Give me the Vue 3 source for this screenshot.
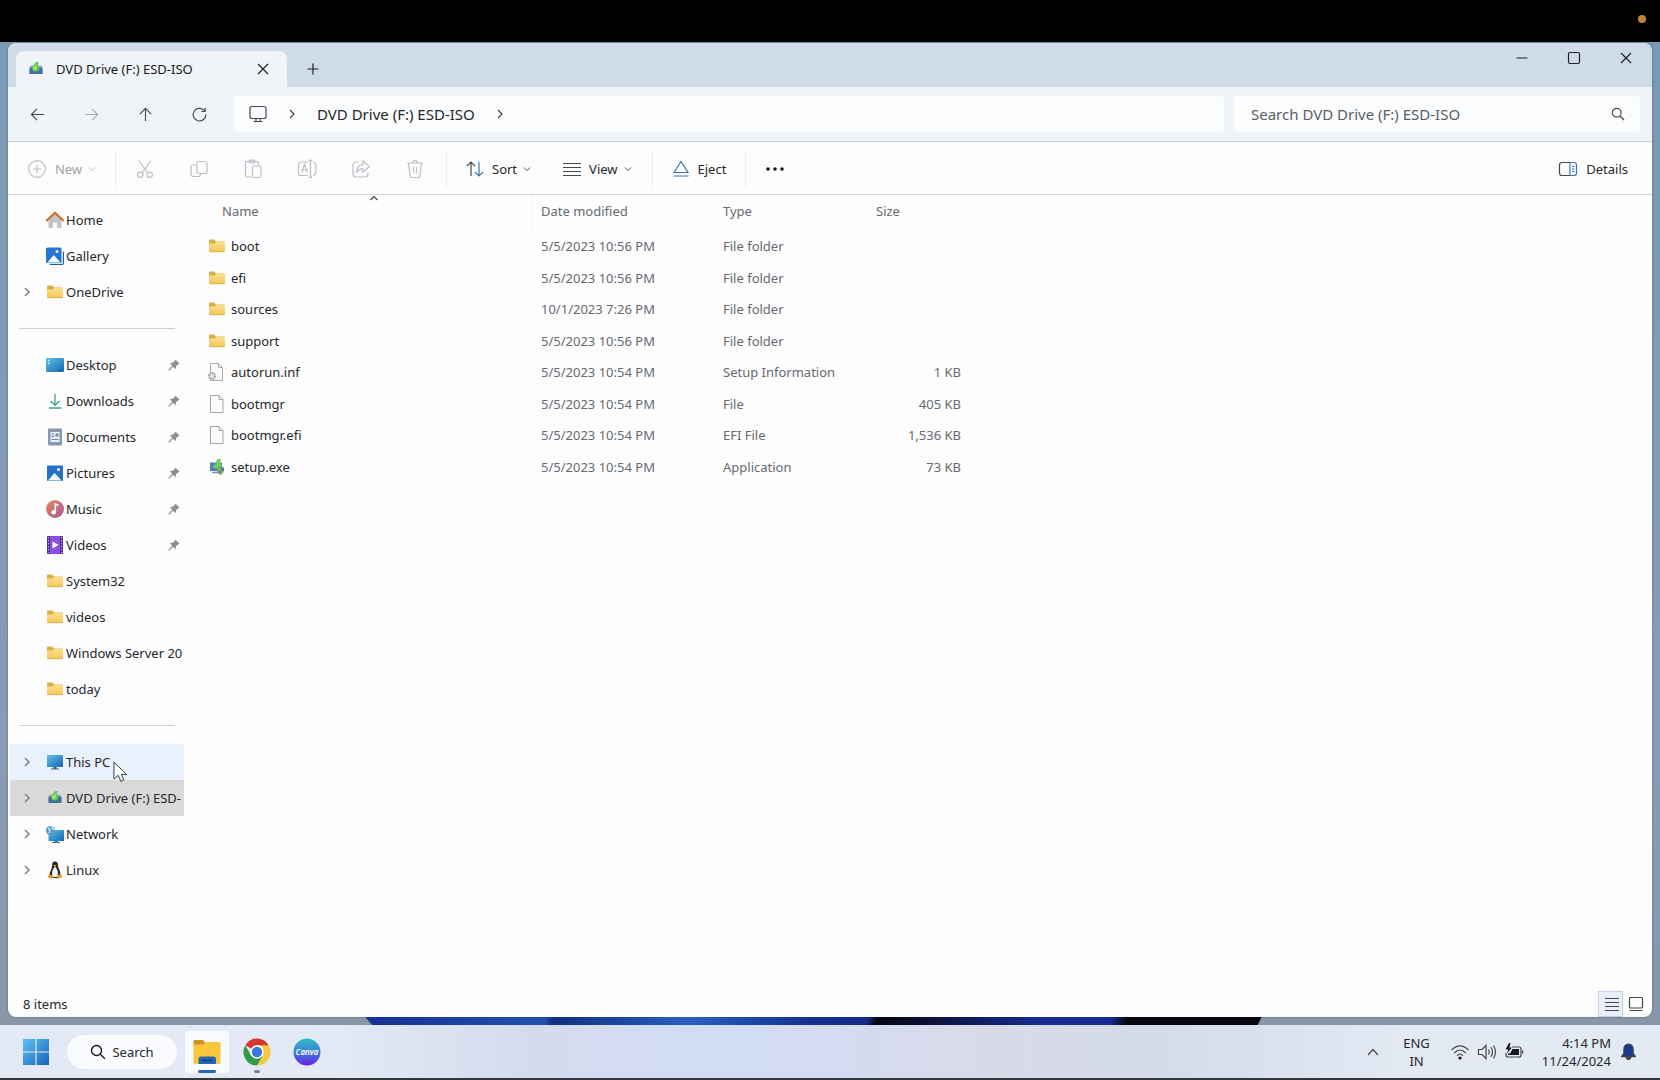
<script setup>
import {reactive} from 'vue'

const data = reactive({
  keyword: "",
  language: ["ENG", "IN"],
  time: "4:14 PM",
  date: "11/24/2024",
  places: [
    {name: "Home", icon: "home"},
    {name: "Gallery", icon: "gallery"},
    {name: "OneDrive", icon: "folder", expand: true}
  ],
  pinned: [
    {name: "Desktop", icon: "desktop", pin: true},
    {name: "Downloads", icon: "download", pin: true},
    {name: "Documents", icon: "document", pin: true},
    {name: "Pictures", icon: "picture", pin: true},
    {name: "Music", icon: "music", pin: true},
    {name: "Videos", icon: "video", pin: true},
    {name: "System32", icon: "folder"},
    {name: "videos", icon: "folder"},
    {name: "Windows Server 20", icon: "folder"},
    {name: "today", icon: "folder"}
  ],
  devices: [
    {name: "This PC", icon: "pc", expand: true, state: "hovered"},
    {name: "DVD Drive (F:) ESD-", icon: "dvd", expand: true, state: "selected"},
    {name: "Network", icon: "network", expand: true},
    {name: "Linux", icon: "linux", expand: true}
  ],
  tools: [
    {name: "Cut", icon: "cut"},
    {name: "Copy", icon: "copy"},
    {name: "Paste", icon: "paste"},
    {name: "Rename", icon: "rename"},
    {name: "Share", icon: "share"},
    {name: "Delete", icon: "trash"}
  ],
  files: [
    {name: "boot", icon: "folder", date: "5/5/2023 10:56 PM", type: "File folder", size: ""},
    {name: "efi", icon: "folder", date: "5/5/2023 10:56 PM", type: "File folder", size: ""},
    {name: "sources", icon: "folder", date: "10/1/2023 7:26 PM", type: "File folder", size: ""},
    {name: "support", icon: "folder", date: "5/5/2023 10:56 PM", type: "File folder", size: ""},
    {name: "autorun.inf", icon: "inf", date: "5/5/2023 10:54 PM", type: "Setup Information", size: "1 KB"},
    {name: "bootmgr", icon: "file", date: "5/5/2023 10:54 PM", type: "File", size: "405 KB"},
    {name: "bootmgr.efi", icon: "file", date: "5/5/2023 10:54 PM", type: "EFI File", size: "1,536 KB"},
    {name: "setup.exe", icon: "setup", date: "5/5/2023 10:54 PM", type: "Application", size: "73 KB"}
  ]
})
</script>

<template>
  <svg class="sprite" aria-hidden="true">
    <defs>
      <linearGradient id="g-folder" x1="0" y1="0" x2="0" y2="1">
        <stop offset="0" stop-color="#fbe08e"/><stop offset="1" stop-color="#f3c75a"/>
      </linearGradient>
      <linearGradient id="g-blue" x1="0" y1="0" x2="1" y2="1">
        <stop offset="0" stop-color="#5cc3e6"/><stop offset="1" stop-color="#1468b4"/>
      </linearGradient>
      <linearGradient id="g-win" x1="0" y1="0" x2="1" y2="1">
        <stop offset="0" stop-color="#5fc0f0"/><stop offset="1" stop-color="#1765c0"/>
      </linearGradient>
      <linearGradient id="g-music" x1="0" y1="0" x2="1" y2="1">
        <stop offset="0" stop-color="#e58a55"/><stop offset="1" stop-color="#a4589c"/>
      </linearGradient>
      <linearGradient id="g-canva" x1="0" y1="0" x2="0" y2="1">
        <stop offset="0" stop-color="#2fc0c4"/><stop offset="0.5" stop-color="#3f7fd8"/><stop offset="1" stop-color="#6a1fe6"/>
      </linearGradient>
    </defs>
    <symbol id="folder" viewBox="0 0 18 18">
      <path d="M1 3.500Q1 2.500 2 2.500H6L8 4.500H16Q17 4.500 17 5.500V8H1Z" fill="#d9ae45"/>
      <path d="M1 6.500H6.500L8 5H17V14Q17 15 16 15H2Q1 15 1 14Z" fill="url(#g-folder)"/>
      <path d="M1.500 14.700H16.500" stroke="#d9a93a" stroke-width="0.700"/>
    </symbol>
    <symbol id="home" viewBox="0 0 18 18">
      <path d="M2.500 8L9 2.500L15.500 8V17H11V11.500H7V17H2.500Z" fill="#c3c3c8"/>
      <path d="M1 9.300L9 1.800L17 9.300" fill="none" stroke="#cf6f2c" stroke-width="2.200" stroke-linecap="round" stroke-linejoin="round"/>
    </symbol>
    <symbol id="gallery" viewBox="0 0 18 18">
      <path d="M5 4H16Q18 4 18 6V16Q18 18 16 18H5Q3 18 3 16Z" fill="#2456a0"/>
      <path d="M3 16V17H15.500Q17 17 17 15.500V4H15Z" fill="#d7e8f7"/>
      <rect x="0" y="0.500" width="15.500" height="15.500" rx="1.500" fill="#2377d2"/>
      <path d="M1.500 15.500L7.700 8L14.500 15.500Z" fill="#f4f9fd"/>
      <circle cx="11" cy="4.500" r="1.500" fill="#fff"/>
    </symbol>
    <symbol id="desktop" viewBox="0 0 18 18">
      <rect y="2" width="18" height="14" rx="1.200" fill="url(#g-blue)"/>
      <path d="M2 4.500H3.500M2 7.500H3.500" stroke="#d6f2fb" stroke-width="1.300"/>
      <path d="M12 14H16.500" stroke="#0e477f" stroke-dasharray="1 1"/>
    </symbol>
    <symbol id="download" viewBox="0 0 18 18">
      <path d="M9 2V13M4.500 9L9 13.300L13.500 9M3 16H15.500" fill="none" stroke="#3da489" stroke-width="1.300"/>
    </symbol>
    <symbol id="document" viewBox="0 0 18 18">
      <rect x="2" y="0.500" width="14" height="17" rx="1" fill="#8797b1"/>
      <rect x="4.500" y="4" width="9" height="10" fill="#e8eef6"/>
      <path d="M5.500 6H8M5.500 8.300H8M5.500 11.500H12.500" stroke="#7285a3" stroke-width="1.200"/>
      <path d="M9.500 5.500H12.500V8.500H9.500Z" fill="#7285a3"/>
    </symbol>
    <symbol id="picture" viewBox="0 0 18 18">
      <rect x="1" y="1.500" width="16" height="15.500" rx="1" fill="#2371cb"/>
      <path d="M2 16.500L8.500 9L15.500 16.500Z" fill="#f4f9fd"/>
      <circle cx="12.500" cy="5.500" r="1.500" fill="#fff"/>
    </symbol>
    <symbol id="music" viewBox="0 0 18 18">
      <circle cx="9" cy="9" r="9" fill="url(#g-music)"/>
      <path d="M9.300 12.300V4L12.500 5.500" fill="none" stroke="#fff" stroke-width="1.600"/>
      <circle cx="7.600" cy="12.300" r="2.300" fill="#fff"/>
    </symbol>
    <symbol id="video" viewBox="0 0 18 18">
      <rect x="1" width="16" height="18" rx="1" fill="#4b2a93"/>
      <rect x="4" width="10" height="18" fill="#8a50dc"/>
      <path d="M2.500 1V17M15.500 1V17" stroke="#c3a7ef" stroke-width="1.200" stroke-dasharray="1.500 1.500"/>
      <path d="M6.500 5.500L12.500 9L6.500 12.500Z" fill="#fff"/>
    </symbol>
    <symbol id="pc" viewBox="0 0 18 18">
      <rect x="1" y="2" width="16" height="12" rx="0.700" fill="url(#g-blue)"/>
      <path d="M7.500 14H10.500V15.500H13V16.500H5V15.500H7.500Z" fill="#3d6789"/>
    </symbol>
    <symbol id="dvd" viewBox="0 0 18 18">
      <path d="M4 5.500H14L15.500 7V14H2.500V7Z" fill="#8fa9b8"/>
      <path d="M2.500 8.500L5 7.500H13L15.500 8.500V14H2.500Z" fill="#40709c"/>
      <path d="M5 8L6.500 5.500L7.500 3.500Q9.500 1.500 12 2.200Q10.500 3.500 11 5.500L12.500 10L9.500 11.500L6 11Z" fill="#62c956"/>
      <path d="M6 8.500L8.500 4.500L10 8L8 10.500Z" fill="#a6ec6c"/>
    </symbol>
    <symbol id="network" viewBox="0 0 18 18">
      <rect x="2.500" y="5" width="15.500" height="11" fill="url(#g-blue)"/>
      <path d="M8.500 16H11.500V17H14V18H6V17H8.500Z" fill="#3d6789"/>
      <circle cx="4.500" cy="5.500" r="4.500" fill="#5a9bc9"/>
      <path d="M2 3L4 5L3 8M5 1.500L7 4L9 4.500" stroke="#d3ebf7" stroke-width="1.300" fill="none"/>
    </symbol>
    <symbol id="linux" viewBox="0 0 18 18">
      <path d="M9 0.500Q12 0.500 12 4Q12 6.500 13.500 9Q15 12 14 15L12 17H6L3.500 14.500Q3.500 11.500 5 9Q6.200 6.500 6.200 4Q6 0.500 9 0.500Z" fill="#23221f"/>
      <path d="M9 5.500Q11 7.500 11.800 10.500Q12.300 14 11 16H7Q5.500 14 6.200 10.500Q7 7.500 9 5.500Z" fill="#f5f5f0"/>
      <path d="M7.200 4.500L9 3.800L10.800 4.700L9 6Z" fill="#e7a92f"/>
      <path d="M1.500 16L3.500 12.500L7.500 16.300L5.500 18ZM16.500 16L14.500 12.500L11 15L11.500 18Z" fill="#d9a02e"/>
    </symbol>
    <symbol id="file" viewBox="0 0 18 18">
      <path d="M2.500 0.500H11L15 4.500V17.500H2.500Z" fill="#fcfcfc" stroke="#a3a5a8"/>
      <path d="M11 0.500V4.500H15" fill="none" stroke="#a3a5a8"/>
    </symbol>
    <symbol id="inf" viewBox="0 0 18 18">
      <path d="M2.500 0.500H10.500L14.500 4.500V17.500H2.500Z" fill="#fafafa" stroke="#a8aaad"/>
      <path d="M10.500 0.500V4.500H14.500" fill="none" stroke="#a8aaad"/>
      <circle cx="4" cy="13" r="3" fill="#e4e4e6" stroke="#9c9ea2" stroke-width="2" stroke-dasharray="1.600 0.700"/>
    </symbol>
    <symbol id="setup" viewBox="0 0 18 18">
      <rect x="2" y="4.500" width="12" height="8.500" fill="#4f7fae"/>
      <path d="M4 9L7 6.500L9 1.500L13 0.500L12 4L14 8L9 11Z" fill="#6ccb67"/>
      <path d="M4 14.500H10" stroke="#7793ad" stroke-width="1.500"/>
      <path d="M9.500 9.500H16V13Q15.500 15.500 12.700 17Q10 15.500 9.500 13Z" fill="#93b64e"/>
      <path d="M12.700 9.500H16V13H12.700ZM9.500 13H12.700V17Q10 15.500 9.500 13Z" fill="#567ea4"/>
    </symbol>
    <symbol id="pin" viewBox="0 0 14 14">
      <path d="M8.500 0.500L13.500 5.500L12 6L9.500 8.500L9 12L6 9L1.500 13.500L0.500 13.500L0.500 12.500L5 8L2 5L5.500 4.500L8 2Z" fill="#8b8e91"/>
    </symbol>
    <symbol id="right" viewBox="0 0 10 10"><path d="M3 1L7 5L3 9"/></symbol>
    <symbol id="down" viewBox="0 0 10 10"><path d="M2 3.500L5 6.500L8 3.500"/></symbol>
    <symbol id="up-small" viewBox="0 0 10 10"><path d="M1.500 5L5 1.500L8.500 5"/></symbol>
    <symbol id="caret" viewBox="0 0 14 14"><path d="M2 10L7 4.500L12 10"/></symbol>
    <symbol id="close" viewBox="0 0 14 14"><path d="M2 2L12 12M12 2L2 12"/></symbol>
    <symbol id="plus" viewBox="0 0 14 14"><path d="M7 1.500V12.500M1.500 7H12.500"/></symbol>
    <symbol id="min" viewBox="0 0 14 14"><path d="M1.500 7H12.500"/></symbol>
    <symbol id="max" viewBox="0 0 14 14"><rect x="1.500" y="1.500" width="11" height="11" rx="1.500"/></symbol>
    <symbol id="back" viewBox="0 0 18 18"><path d="M16 9H2.500M8.500 3L2.500 9L8.500 15"/></symbol>
    <symbol id="forward" viewBox="0 0 18 18"><path d="M2 9H15.500M9.500 3L15.500 9L9.500 15"/></symbol>
    <symbol id="up" viewBox="0 0 18 18"><path d="M9 16V2.500M3 8.500L9 2.500L15 8.500"/></symbol>
    <symbol id="refresh" viewBox="0 0 18 18"><path d="M15.700 9A6.700 6.700 0 1 1 13.500 4.200L15 5.700M15 1.800V5.800H11"/></symbol>
    <symbol id="monitor" viewBox="0 0 18 18"><path d="M3 1.500H15Q17 1.500 17 3.500V11.500Q17 13.500 15 13.500H3Q1 13.500 1 11.500V3.500Q1 1.500 3 1.500ZM7 13.500V16.500M11 13.500V16.500M4.500 16.500H13.500"/></symbol>
    <symbol id="search" viewBox="0 0 14 14"><path d="M9 9L13 13"/><circle cx="5.700" cy="5.700" r="4.400"/></symbol>
    <symbol id="new" viewBox="0 0 20 20"><circle cx="10" cy="10" r="8.300"/><path d="M10 6V14M6 10H14"/></symbol>
    <symbol id="cut" viewBox="0 0 20 20"><path d="M4 1.500L12.500 13.500M16 1.500L7.500 13.500"/><circle cx="5.300" cy="15.800" r="2.700"/><circle cx="14.700" cy="15.800" r="2.700"/></symbol>
    <symbol id="copy" viewBox="0 0 20 20"><rect x="8" y="2.500" width="10" height="12" rx="2"/><path d="M8 6H4Q2 6 2 8V15Q2 17.500 4.500 17.500H9.500Q11.500 17.500 12 15"/></symbol>
    <symbol id="paste" viewBox="0 0 20 20"><path d="M8.500 18H4Q2.500 18 2.500 16.500V4Q2.500 2.500 4 2.500H14Q15.500 2.500 15.500 4V6M6 2.500Q6 1.200 7 1.200H11Q12 1.200 12 2.500T11 4H7Q6 4 6 2.500"/><rect x="9.500" y="7" width="8.500" height="11.500" rx="1.500" class="blue"/></symbol>
    <symbol id="rename" viewBox="0 0 20 20"><path d="M11 3H4Q1.500 3 1.500 5.500V14Q1.500 16.500 4 16.500H11M16 3Q18.800 3.500 18.800 6V13.500Q18.800 16 16 16.500M11.500 1.200H12.500Q13.500 1.200 13.500 3V16.500Q13.500 18.500 12.500 18.500H11.500M15.500 1.200Q13.500 1.200 13.500 3M15.500 18.500Q13.500 18.500 13.500 16.500M4.500 13.500L7.500 5.500L10.500 13.500M5.500 11H9.500"/></symbol>
    <symbol id="share" viewBox="0 0 20 20"><path d="M8 3H5Q2 3 2 6V15Q2 18 5 18H14Q17 18 17 15V13.500M12 2L18.500 7.500L12 13V9.800Q8 9.500 5.500 13.500Q6 6 12 5.300Z"/></symbol>
    <symbol id="trash" viewBox="0 0 20 20"><path d="M2 4H18M7.500 4Q7.500 1.500 10 1.500T12.500 4M3.500 4L5 16.500Q5.200 18.500 7 18.500H13Q14.800 18.500 15 16.500L16.500 4M8.500 8V14M11.500 8V14"/></symbol>
    <symbol id="sort" viewBox="0 0 18 18"><path d="M5 16V2M0.800 6.200L5 2L9.200 6.200"/><path d="M13 2V16M8.800 11.800L13 16L17.200 11.800" class="blue"/></symbol>
    <symbol id="view" viewBox="0 0 18 18"><path d="M0 3.500H18M0 7.500H18M0 11.500H18M0 15.500H18"/></symbol>
    <symbol id="eject" viewBox="0 0 18 18"><path d="M9 1.500L16 12.500H2ZM1.500 16H16.500" class="blue"/></symbol>
    <symbol id="more" viewBox="0 0 20 20"><g class="solid"><circle cx="3" cy="10" r="1.800"/><circle cx="10" cy="10" r="1.800"/><circle cx="17" cy="10" r="1.800"/></g></symbol>
    <symbol id="details" viewBox="0 0 20 20"><path d="M12 3.500H4Q1.500 3.500 1.500 6V14Q1.500 16.500 4 16.500H12"/><path d="M12 3.500H16Q18.500 3.500 18.500 6V14Q18.500 16.500 16 16.500H12ZM14 7.500H16.500M14 10H16.500M14 12.500H16.500" class="blue"/></symbol>
    <symbol id="list" viewBox="0 0 16 16"><path d="M1 2.500H15M1 6.500H15M1 10.500H15M1 14.500H15"/></symbol>
    <symbol id="thumb" viewBox="0 0 16 16"><rect x="1.500" y="1.500" width="13" height="10.500" rx="1"/><path d="M1.500 14.500H14.500"/></symbol>
    <symbol id="wifi" viewBox="0 0 20 20"><path d="M1.500 8Q10 -0.500 18.500 8M4.300 11Q10 5 15.700 11M7 13.800Q10 10.500 13 13.800"/><circle cx="10" cy="16" r="1.600" class="solid"/></symbol>
    <symbol id="volume" viewBox="0 0 20 20"><path d="M1.500 7.500H5L9 3.500V16.500L5 12.500H1.500ZM11.500 7.500Q13 10 11.500 12.500M14 5.300Q17 10 14 14.700M16.500 3.500Q20.500 10 16.500 16.500"/></symbol>
    <symbol id="battery" viewBox="0 0 20 20"><path d="M8 5H15Q17 5 17 7V13Q17 15 15 15H4Q2 15 2 13V11M18.700 8.500V11.500"/><path d="M8.500 7H15V13H4V11.500H6Z" class="solid"/><path d="M5 1L1.500 7.500H4.500L2.500 12L8 5.500H5.500L6.500 1Z" class="solid"/></symbol>
    <symbol id="bell" viewBox="0 0 16 18"><path d="M8 1Q13 1.300 13 7V11L15.500 14.500H0.500L3 11V7Q3 1.300 8 1ZM5.500 15.500H10.500Q10 17.500 8 17.500T5.500 15.500Z" fill="#173a8c"/></symbol>
    <symbol id="windows" viewBox="0 0 26 26"><path d="M0 0H12.400V12.400H0ZM13.600 0H26V12.400H13.600ZM0 13.600H12.400V26H0ZM13.600 13.600H26V26H13.600Z" fill="url(#g-win)"/></symbol>
    <symbol id="explorer" viewBox="0 0 28 28">
      <path d="M0.500 3Q0.500 2 1.500 2H10L12 4.500H20V9H0.500Z" fill="#cf9327"/>
      <path d="M0.500 6.500H10.500L12.500 4H26.500Q27.500 4 27.500 5V25Q27.500 26 26.500 26H1.500Q0.500 26 0.500 25Z" fill="#fac63c"/>
      <path d="M5.500 26V21.500Q5.500 18.500 8 18.500H20.500Q23 18.500 23 21.500V26Z" fill="#2365ae"/>
      <path d="M9 22.500H19.500" stroke="#123f7c" stroke-width="1.500"/>
    </symbol>
    <symbol id="chrome" viewBox="0 0 28 28">
      <path d="M14 14L2.300 7.250A13.500 13.500 0 0 1 25.700 7.250Z" fill="#d4382f"/>
      <path d="M14 7.250H25.700A13.500 13.500 0 0 1 14 27.500L19.850 17.400Z" fill="#f7c840"/>
      <path d="M8.150 17.400L2.300 7.250A13.500 13.500 0 0 0 14 27.500L19.850 17.400Z" fill="#35974a"/>
      <circle cx="14" cy="14" r="6.700" fill="#fff"/>
      <circle cx="14" cy="14" r="5.200" fill="#3a78e0"/>
    </symbol>
    <symbol id="cursor" viewBox="0 0 16 24">
      <path d="M1 1V19L5.500 15L8.500 21.500L11.500 20L8.800 14H14.500Z" fill="#fff" stroke="#2b2f36"/>
    </symbol>
  </svg>

  <main class="screen">
    <div class="camera-bar"><span class="dot"></span></div>

    <section class="window">
      <header class="titlebar">
        <div class="tab">
          <svg class="i18"><use href="#dvd"/></svg>
          <span class="tab-name">DVD Drive (F:) ESD-ISO</span>
          <button class="btn line dark" aria-label="Close tab"><svg class="i14"><use href="#close"/></svg></button>
        </div>
        <button class="btn line dark add" aria-label="New tab"><svg class="i14"><use href="#plus"/></svg></button>
        <div class="controls">
          <button class="btn line dark" aria-label="Minimize"><svg class="i14"><use href="#min"/></svg></button>
          <button class="btn line dark" aria-label="Maximize"><svg class="i14"><use href="#max"/></svg></button>
          <button class="btn line dark" aria-label="Close"><svg class="i14"><use href="#close"/></svg></button>
        </div>
      </header>

      <nav class="navbar">
        <div class="history">
          <button class="btn line" aria-label="Back"><svg class="i18"><use href="#back"/></svg></button>
          <button class="btn line off" aria-label="Forward"><svg class="i18"><use href="#forward"/></svg></button>
          <button class="btn line" aria-label="Up"><svg class="i18"><use href="#up"/></svg></button>
          <button class="btn line" aria-label="Refresh"><svg class="i18"><use href="#refresh"/></svg></button>
        </div>
        <div class="address line">
          <svg class="i18"><use href="#monitor"/></svg>
          <svg class="i10"><use href="#right"/></svg>
          <button class="btn crumb">DVD Drive (F:) ESD-ISO</button>
          <svg class="i10"><use href="#right"/></svg>
        </div>
        <label class="search line">
          <input v-model="data.keyword" type="text" placeholder="Search DVD Drive (F:) ESD-ISO" aria-label="Search" autocomplete="off"/>
          <svg class="i14"><use href="#search"/></svg>
        </label>
      </nav>

      <div class="toolbar line">
        <button class="btn tool new" disabled>
          <svg class="i20"><use href="#new"/></svg>New<svg class="i10"><use href="#down"/></svg>
        </button>
        <span class="sep tight"></span>
        <button v-for="item in data.tools" :key="item.name" class="btn square" disabled :aria-label="item.name">
          <svg class="i20"><use :href="'#' + item.icon"/></svg>
        </button>
        <span class="sep after"></span>
        <button class="btn tool"><svg class="i18"><use href="#sort"/></svg>Sort<svg class="i10"><use href="#down"/></svg></button>
        <button class="btn tool next"><svg class="i18"><use href="#view"/></svg>View<svg class="i10"><use href="#down"/></svg></button>
        <span class="sep"></span>
        <button class="btn tool"><svg class="i18"><use href="#eject"/></svg>Eject</button>
        <span class="sep"></span>
        <button class="btn" aria-label="More"><svg class="i20"><use href="#more"/></svg></button>
        <button class="btn tool details"><svg class="i20"><use href="#details"/></svg>Details</button>
      </div>

      <div class="content">
        <aside class="sidebar">
          <ul v-for="(group, index) in [data.places, data.pinned, data.devices]" :key="index">
            <li v-for="item in group" :key="item.name" :class="item.state">
              <svg class="i10 expand line"><use v-if="item.expand" href="#right"/></svg>
              <svg class="i18"><use :href="'#' + item.icon"/></svg>
              <a href="#">{{ item.name }}</a>
              <svg v-if="item.pin" class="pin"><use href="#pin"/></svg>
              <svg v-if="item.state === 'hovered'" class="cursor"><use href="#cursor"/></svg>
            </li>
          </ul>
        </aside>

        <div class="files">
          <table>
            <thead>
              <tr>
                <th class="col-name">Name<svg class="i10 sorted line"><use href="#up-small"/></svg></th>
                <th class="col-date">Date modified</th>
                <th class="col-type">Type</th>
                <th class="col-size">Size</th>
              </tr>
            </thead>
            <tbody>
              <tr v-for="item in data.files" :key="item.name">
                <td class="name"><div><svg class="i18"><use :href="'#' + item.icon"/></svg>{{ item.name }}</div></td>
                <td>{{ item.date }}</td>
                <td>{{ item.type }}</td>
                <td class="size">{{ item.size }}</td>
              </tr>
            </tbody>
          </table>
        </div>
      </div>

      <footer class="status">
        <span>8 items</span>
        <div class="modes">
          <button class="btn line active" aria-label="Details view"><svg class="i16"><use href="#list"/></svg></button>
          <button class="btn line" aria-label="Thumbnail view"><svg class="i16"><use href="#thumb"/></svg></button>
        </div>
      </footer>
    </section>

    <div class="wallpaper"></div>

    <footer class="taskbar">
      <button class="btn start" aria-label="Start"><svg class="i26"><use href="#windows"/></svg></button>
      <button class="btn pill line"><svg class="i16"><use href="#search"/></svg>Search</button>
      <button class="btn app open" aria-label="File Explorer"><svg class="i28"><use href="#explorer"/></svg></button>
      <button class="btn app running" aria-label="Chrome"><svg class="i28"><use href="#chrome"/></svg></button>
      <button class="btn app" aria-label="Canva">
        <svg class="i28" viewBox="0 0 28 28">
          <circle cx="14" cy="14" r="13.500" fill="url(#g-canva)"/>
          <text x="14" y="17" text-anchor="middle" class="canva">Canva</text>
        </svg>
      </button>

      <div class="tray line">
        <svg class="i14"><use href="#caret"/></svg>
        <div class="lang"><span v-for="item in data.language" :key="item">{{ item }}</span></div>
        <div class="system">
          <svg class="i20"><use href="#wifi"/></svg>
          <svg class="i20"><use href="#volume"/></svg>
          <svg class="i20"><use href="#battery"/></svg>
        </div>
        <div class="clock"><span>{{ data.time }}</span><span>{{ data.date }}</span></div>
        <svg class="bell"><use href="#bell"/></svg>
      </div>
    </footer>
  </main>
</template>

<style>
body {
  margin: 0;
  background: #000;
}
</style>

<style scoped>
.sprite {
  position: absolute;
  width: 0;
  height: 0;
}

.screen {
  --accent: #3c74b4;
  display: flex;
  flex-direction: column;
  box-sizing: border-box;
  min-height: 100vh;
  border-bottom: 2px solid #34363c;
  background: linear-gradient(to bottom, #7899b4, #8b9ab5 70%, #8795a5);
  font-family: "Noto Sans", "Segoe UI", sans-serif;
  font-size: 13px;
  line-height: 18px;
  color: #25282c;
}

.camera-bar {
  display: flex;
  justify-content: flex-end;
  align-items: center;
  box-sizing: border-box;
  height: 42px;
  padding: 0 14px 4px 0;
  background: #000;
}

.camera-bar .dot {
  width: 8px;
  height: 8px;
  border-radius: 50%;
  background: #c4833c;
}

.btn {
  display: flex;
  align-items: center;
  justify-content: center;
  padding: 0;
  border: none;
  background: none;
  font: inherit;
  color: inherit;
}

svg {
  flex: none;
  display: block;
}

.line {
  fill: none;
  stroke: #44484d;
  stroke-width: 1.2;
}

.dark {
  stroke: #1e2226;
}

.off {
  stroke: #a9adb2;
}

.blue {
  stroke: var(--accent);
}

.solid {
  fill: #17191c;
  stroke: none;
}

.i10 {
  width: 10px;
  height: 10px;
}

.i14 {
  width: 14px;
  height: 14px;
}

.i16 {
  width: 16px;
  height: 16px;
}

.i18 {
  width: 18px;
  height: 18px;
}

.i20 {
  width: 20px;
  height: 20px;
}

.i26 {
  width: 26px;
  height: 26px;
}

.i28 {
  width: 28px;
  height: 28px;
}

.window {
  flex: 1;
  display: flex;
  flex-direction: column;
  margin: 1px 8px 0;
  border-radius: 8px;
  overflow: hidden;
  background: #fdfdfe;
  box-shadow: 0 0 2px #46586a;
}

.titlebar {
  display: flex;
  align-items: flex-end;
  height: 44px;
  padding-left: 8px;
  background: #cfdbe7;
}

.tab {
  display: flex;
  align-items: center;
  box-sizing: border-box;
  width: 271px;
  height: 36px;
  padding: 0 17px 0 11px;
  border-radius: 8px 8px 0 0;
  background: #f0f4f8;
}

.tab-name {
  flex: 1;
  margin-left: 11px;
  color: #17191c;
}

.add {
  width: 52px;
  height: 36px;
}

.controls {
  display: flex;
  align-self: flex-start;
  margin-left: auto;
}

.controls .btn {
  width: 52px;
  height: 30px;
}

.navbar {
  display: flex;
  align-items: center;
  gap: 8px;
  height: 54px;
  padding: 0 12px 0 2px;
  border-bottom: 1px solid #cdd1d6;
  background: #f0f4f8;
}

.history {
  display: flex;
}

.history .btn {
  width: 54px;
  height: 36px;
}

.history .i18 {
  width: 17px;
  height: 17px;
}

.address {
  flex: 1;
  display: flex;
  align-items: center;
  gap: 20px;
  height: 36px;
  padding-left: 15px;
  border-radius: 4px;
  background: #fbfcfe;
  font-size: 15px;
}

.search {
  display: flex;
  align-items: center;
  box-sizing: border-box;
  width: 25%;
  max-width: 406px;
  height: 36px;
  margin-left: 2px;
  padding: 0 15px 0 17px;
  border-radius: 4px;
  background: #fbfcfe;
}

.search input {
  flex: 1;
  min-width: 0;
  padding: 0;
  border: none;
  outline: none;
  background: none;
  font: inherit;
  font-size: 15px;
}

.search input::placeholder {
  color: #5a5e63;
  opacity: 1;
}

.toolbar {
  display: flex;
  align-items: center;
  height: 50px;
  padding: 2px 24px 0 18px;
  border-bottom: 1px solid #d3d5d8;
}

.tool {
  gap: 8px;
}

.tool .i10 {
  margin-left: -3px;
  stroke-width: 1;
}

.new {
  width: 72px;
}

.btn:disabled {
  --accent: #b0c4d4;
  color: #9ea2a6;
  stroke: #bac0c6;
}

.square {
  width: 54px;
  height: 36px;
}

.next {
  margin-left: 31px;
}

.sep {
  width: 1px;
  height: 38px;
  margin: 0 19px;
  background: #eceef0;
}

.sep.tight {
  margin: 0 2px 0 17px;
}

.sep.after {
  margin-left: 4px;
}

.details {
  margin-left: auto;
}

.content {
  flex: 1;
  display: flex;
}

.sidebar {
  width: 178px;
  padding-top: 7px;
  border-right: 1px solid #f6f7f8;
}

.sidebar ul {
  margin: 0;
  padding: 0;
  list-style: none;
}

.sidebar ul + ul::before {
  content: "";
  display: block;
  height: 1px;
  margin: 18px 11px;
  background: #cfd1d3;
}

.sidebar li {
  position: relative;
  display: flex;
  align-items: center;
  height: 36px;
  margin: 0 2px;
  padding-left: 12px;
}

.sidebar li.hovered {
  background: #e9f1fc;
}

.sidebar li.selected {
  background: #d9d9d9;
}

.sidebar a {
  flex: 1;
  margin-left: 2px;
  color: inherit;
  text-decoration: none;
  white-space: nowrap;
}

.expand {
  margin-right: 14px;
  stroke: #7d8185;
  stroke-width: 1.5;
}

.pin {
  width: 12px;
  height: 12px;
  margin-right: 4px;
}

/* mouse pointer over the hovered entry */
.cursor {
  position: absolute;
  left: 103px;
  top: 17px;
  z-index: 1;
  width: 15px;
  height: 23px;
}

.files {
  flex: 1;
}

table {
  table-layout: fixed;
  width: 782px;
  border-collapse: separate;
  border-spacing: 0;
  color: #666a6f;
}

th {
  box-sizing: border-box;
  height: 35px;
  padding: 0 8px 4px;
  font-weight: normal;
  text-align: left;
}

.col-name {
  position: relative;
  width: 346px;
  padding-left: 35px;
  border-right: 1px solid #f3f4f5;
}

.col-date {
  width: 182px;
}

.col-type {
  width: 153px;
}

.sorted {
  position: absolute;
  left: 50%;
  top: 0;
  margin-left: 9px;
}

td {
  height: 32px;
  padding: 0 8px;
}

tr:nth-child(even) td {
  height: 31px;
}

.name {
  padding-left: 21px;
  color: #25282c;
}

.name div {
  display: flex;
  align-items: center;
  gap: 5px;
}

.size {
  text-align: right;
}

.status {
  display: flex;
  align-items: center;
  justify-content: space-between;
  height: 26px;
  padding: 0 4px 0 15px;
}

.modes {
  display: flex;
}

.modes .btn {
  box-sizing: border-box;
  width: 25px;
  height: 26px;
}

.modes .active {
  padding-left: 3px;
  border: 1px solid #c3cfe6;
  background: #e8effa;
}

.wallpaper {
  height: 8px;
  margin: 0 24% 0 22%;
  background: linear-gradient(100deg, #16318f, #2350b0 20%, #10307c 21%, #2a5fc0 36%, #14308c 50%, #152a86 56%, #05060f 57%, #172c8e 75%, #172c8e 83%, #05060f 85%);
  clip-path: polygon(0 0, 100% 0, calc(100% - 4px) 100%, 7px 100%);
}

.taskbar {
  display: flex;
  align-items: center;
  height: 53px;
  padding: 0 24px 0 23px;
  background: linear-gradient(to right, #e3eaf5 20%, #d3dcee 32%, #d2dcf5 45%, #d8dae8 60%, #d4dbea 70%, #e3eaf4 85%);
}

.pill {
  gap: 6px;
  width: 110px;
  height: 34px;
  margin: 0 8px 0 18px;
  border-radius: 17px;
  background: #fafbfe;
}

.pill svg {
  stroke: #17191c;
}

.app {
  position: relative;
  width: 44px;
  height: 42px;
  margin-right: 6px;
  border-radius: 4px;
}

.open {
  background: #f8fafd;
}

.open::after,
.running::after {
  content: "";
  position: absolute;
  bottom: 0;
  width: 18px;
  height: 3px;
  border-radius: 2px;
  background: #2a67b8;
}

.running::after {
  width: 6px;
  background: #7d828a;
}

.canva {
  fill: #fff;
  font-family: "Noto Sans", sans-serif;
  font-size: 8px;
  font-style: italic;
  font-weight: 600;
}

.tray {
  display: flex;
  align-items: center;
  margin-left: auto;
}

.lang {
  display: flex;
  flex-direction: column;
  align-items: center;
  margin: 0 20px 0 23px;
}

.system {
  display: flex;
  gap: 7px;
}

.clock {
  display: flex;
  flex-direction: column;
  align-items: flex-end;
  margin: 0 10px 0 18px;
}

.bell {
  width: 15px;
  height: 17px;
}
</style>
